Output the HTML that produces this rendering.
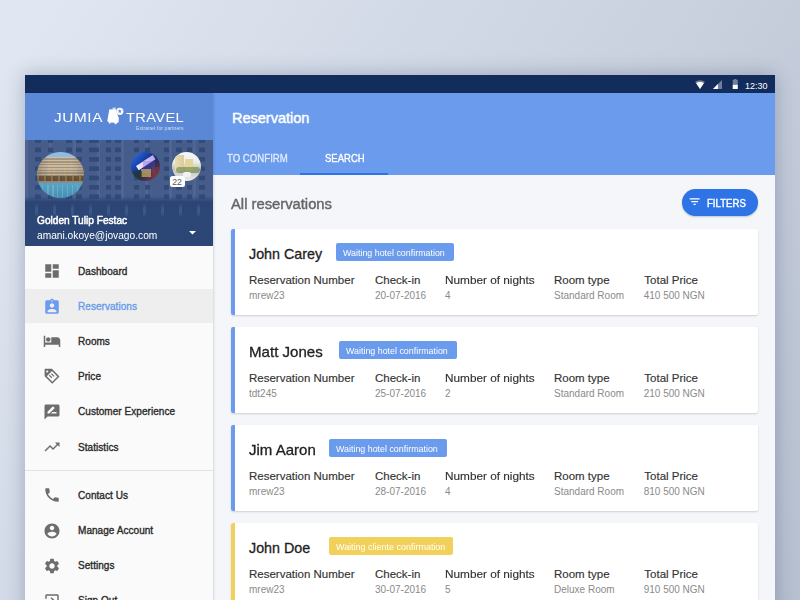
<!DOCTYPE html>
<html><head><meta charset="utf-8">
<style>
*{margin:0;padding:0;box-sizing:border-box;}
html,body{width:800px;height:600px;overflow:hidden;}
body{font-family:"Liberation Sans",sans-serif;background:linear-gradient(124deg,#e2e8f3 0%,#b7c0d0 100%);position:relative;}
.abs{position:absolute;}
.t{position:absolute;white-space:nowrap;line-height:1;transform-origin:0 0;}
svg{position:absolute;display:block;}
#tab{position:absolute;left:25px;top:75px;width:750px;height:540px;background:#f4f6fa;box-shadow:0 0 18px rgba(40,60,95,.32);overflow:hidden;}
#status{position:absolute;left:0;top:0;width:750px;height:18px;background:#122c5b;}
#side{position:absolute;left:0;top:18px;width:188px;height:520px;background:#fafafa;box-shadow:1px 0 2px rgba(0,0,0,.12);z-index:2;}
#shead{position:absolute;left:0;top:0;width:188px;height:47px;background:#5a88d6;}
#prof{position:absolute;left:0;top:47px;width:188px;height:106px;background:#3a5585;overflow:hidden;}
#app{position:absolute;left:188px;top:18px;width:562px;height:82px;background:#6a9bec;}
.card{position:absolute;left:206px;width:527px;height:86px;background:#fff;border-radius:2px;box-shadow:0 1px 2px rgba(0,0,0,.16);overflow:hidden;}
.card .bar{position:absolute;left:0;top:0;width:3.5px;height:86px;background:#6a9bec;}
.card.y .bar{background:#f2d15a;}
.nm{left:18px;top:17.7px;font-size:14.3px;color:#222;-webkit-text-stroke:0.3px currentColor;}
.badge{position:absolute;top:14px;width:118px;height:18px;background:#6a9bec;border-radius:2px;}
.badge span{position:absolute;left:7px;top:5.3px;font-size:9.6px;line-height:1;color:#fff;white-space:nowrap;transform:scaleX(.925);transform-origin:0 0;}
.card.y .badge{background:#f2d15a;width:124px;}
.card.y .badge span{transform:scaleX(.935);}
.lb{top:45.8px;font-size:11.5px;color:#333;-webkit-text-stroke:0.15px currentColor;}
.vl{top:62px;font-size:10px;color:#8a8a8a;}
.nav{left:53px;font-size:10px;font-weight:normal;color:#2a2a2a;letter-spacing:0.05px;-webkit-text-stroke:0.35px currentColor;}
.ic{left:17.75px;width:18px;height:18px;fill:#6d6d6d;}
</style></head><body>
<div id="tab">
  <div id="status">
    <svg style="left:670px;top:4.5px;width:10px;height:9px" viewBox="0 0 24 21"><path fill="rgba(255,255,255,.4)" d="M12 21L23.6 4C23.2 3.7 18.7 0 12 0S.8 3.7.4 4z"/><path fill="#fff" d="M12 21L21.2 7.3C19.5 6 16.3 4.3 12 4.3S4.5 6 2.8 7.3z"/></svg>
    <svg style="left:688px;top:4.5px;width:9px;height:9px" viewBox="0 0 20 20"><path fill="rgba(255,255,255,.4)" d="M0 20h20V0z"/><path fill="#fff" d="M0 20h11V9z"/></svg>
    <svg style="left:706.8px;top:3.6px;width:6.5px;height:10.2px" viewBox="0 0 10 20"><path fill="rgba(255,255,255,.4)" d="M3 0h4v1.5h2.3c.4 0 .7.3.7.7V10H0V2.2C0 1.8.3 1.5.7 1.5H3z"/><path fill="#fff" d="M0 11h10v8.3c0 .4-.3.7-.7.7H.7c-.4 0-.7-.3-.7-.7z"/></svg>
    <div class="t" style="left:720px;top:6.5px;font-size:9px;color:#fff;">12:30</div>
  </div>
  <div id="side">
    <div id="shead">
      <div class="t" style="left:29.3px;top:17.8px;font-size:13px;color:#fff;letter-spacing:0.5px;transform:scaleX(1.18);">JUMIA</div>
      <svg style="left:78px;top:11px;width:24px;height:24px" viewBox="103 104 24 24"><path fill="#fff" d="M109.3 109.4L115.6 109.1L116.9 113.2L118.9 118.2L118.5 122.6L116.6 122.9L116.4 124.3L114.8 124.3L114.5 122.8L110.6 122.4L110.4 123.4L109 123.4L108.6 122.1L107.3 121z"/><path fill="#fff" d="M112.6 107.7h3.2v1h-3.2z"/><circle cx="119.8" cy="111.3" r="3.6" fill="#fff"/><path fill="#5a88d6" d="M119.80,109.10 L120.36,110.53 L121.89,110.62 L120.70,111.59 L121.09,113.08 L119.80,112.25 L118.51,113.08 L118.90,111.59 L117.71,110.62 L119.24,110.53Z"/></svg>
      <div class="t" style="left:100.5px;top:17.8px;font-size:13px;color:#fff;letter-spacing:0.3px;transform:scaleX(1.13);">TRAVEL</div>
      <div class="t" style="left:110.8px;top:32.5px;font-size:5.7px;color:#cfdcf5;transform:scaleX(.92);">Extranet for partners</div>
    </div>
    <div id="prof">
      <div class="abs" style="left:0;top:0;width:188px;height:62px;background:#465d8c;"></div>
      <div class="abs" style="left:0;top:0;width:188px;height:62px;background:repeating-linear-gradient(90deg,rgba(95,118,160,.35) 0 3px,transparent 3px 24px);"></div>
      <div class="abs" style="left:0;top:0;width:188px;height:62px;background:linear-gradient(180deg,#2f4774 0 4.5px,transparent 4.5px);background-size:100% 9.35px;background-position:0 7.6px;-webkit-mask-image:linear-gradient(90deg,transparent 10px,#000 10px,#000 16px,transparent 16px,transparent 22.5px,#000 22.5px,#000 27.5px,transparent 27.5px,transparent 41px,#000 41px,#000 47px,transparent 47px,transparent 51px,#000 51px,#000 57px,transparent 57px,transparent 64px,#000 64px,#000 74px,transparent 74px,transparent 80.6px,#000 80.6px,#000 85.6px,transparent 85.6px,transparent 90px,#000 90px,#000 96px,transparent 96px,transparent 109.4px,#000 109.4px,#000 114.4px,transparent 114.4px,transparent 119.7px,#000 119.7px,#000 124.7px,transparent 124.7px,transparent 139px,#000 139px,#000 144px,transparent 144px,transparent 151px,#000 151px,#000 157px,transparent 157px,transparent 161.7px,#000 161.7px,#000 166.7px,transparent 166.7px,transparent 174px,#000 174px,#000 180px,transparent 180px);opacity:.85;"></div>
      <div class="abs" style="left:0;top:56px;width:188px;height:50px;background:linear-gradient(180deg,rgba(42,67,115,0) 0,rgba(42,67,115,.95) 6px,#2c4676 20px,#2b4575 50px);"></div>
      <div class="abs" style="left:0;top:63px;width:188px;height:14px;background:repeating-linear-gradient(90deg,transparent 0 10px,rgba(100,130,180,.3) 10px 13px,transparent 13px 18px);-webkit-mask-image:linear-gradient(180deg,transparent 0,#000 40%,#000 70%,transparent 100%);"></div>
      <div class="abs" style="left:12px;top:11.5px;width:46.6px;height:46.6px;border-radius:50%;overflow:hidden;background:linear-gradient(180deg,#8dbde6 0,#8dbde6 11%,#cdbfa8 11%,#c2b39d 51%,#6b5840 52%,#5e503e 63%,#a08078 64%,#8a8a98 67%,#55a5c8 68%,#3f90bb 100%);">
        <div class="abs" style="left:0;top:5px;width:47px;height:19px;background:repeating-linear-gradient(180deg,transparent 0 1.4px,rgba(70,55,40,.3) 1.4px 2.8px),repeating-linear-gradient(90deg,rgba(235,190,120,.3) 0 1.5px,transparent 1.5px 5.5px);"></div><div class="abs" style="left:0;top:5px;width:47px;height:20px;background:linear-gradient(90deg,rgba(90,85,80,.35) 0,transparent 25%,transparent 75%,rgba(90,85,80,.3) 100%);"></div>
        <div class="abs" style="left:0;top:24px;width:47px;height:5px;background:repeating-linear-gradient(90deg,rgba(200,140,60,.45) 0 2px,rgba(60,80,50,.3) 2px 4px,transparent 4px 7px);"></div>
        <div class="abs" style="left:0;top:33px;width:47px;height:14px;background:repeating-linear-gradient(90deg,rgba(210,200,160,.3) 0 1.5px,transparent 1.5px 5px);"></div>
      </div>
      <div class="abs" style="left:105.8px;top:11.8px;width:29px;height:29px;border-radius:50%;overflow:hidden;background:linear-gradient(135deg,#3a7ae0 0,#1d4fc0 25%,#13308a 45%,#2a2a60 60%,#6a3a40 85%,#4a2a28 100%);">
        <div class="abs" style="left:5px;top:9px;width:20px;height:4.5px;background:linear-gradient(90deg,#f0ecff,#b8a8e8);transform:rotate(-33deg);transform-origin:0 0;top:14px;"></div>
        <div class="abs" style="left:12px;top:9px;width:12px;height:12px;background:rgba(110,80,200,.3);"></div>
        <div class="abs" style="left:10px;top:17px;width:10px;height:8px;background:rgba(235,200,90,.6);"></div>
        <div class="abs" style="left:0;top:19px;width:11px;height:10px;background:rgba(40,60,30,.6);"></div>
        <div class="abs" style="left:21px;top:15px;width:8px;height:14px;background:rgba(150,60,50,.35);"></div>
      </div>
      <div class="abs" style="left:146.7px;top:11.5px;width:29px;height:29px;border-radius:50%;overflow:hidden;background:linear-gradient(180deg,#f4f6f8 0,#eceeed 35%,#d9d6c4 48%,#bfc2b8 62%,#cfd0cc 75%,#eeeeec 100%);">
        <div class="abs" style="left:3px;top:3px;width:9px;height:16px;background:linear-gradient(90deg,#e8ddb0,#d8cc98);"></div>
        <div class="abs" style="left:13px;top:7px;width:8px;height:12px;background:#e2d49a;"></div>
        <div class="abs" style="left:4px;top:15px;width:24px;height:6px;background:rgba(95,125,60,.55);border-radius:3px;"></div>
        <div class="abs" style="left:11px;top:20px;width:8px;height:5px;background:#f2f2f2;border-radius:2px;"></div>
      </div>
      <div class="abs" style="left:144.8px;top:35.5px;width:15.2px;height:11.5px;border-radius:2.5px;background:#fff;"></div>
      <div class="t" style="left:147.2px;top:37.6px;font-size:8.7px;color:#555;">22</div>
      <div class="t" style="left:11.7px;top:74.8px;font-size:10.5px;color:#fff;-webkit-text-stroke:0.5px currentColor;transform:scaleX(.965);">Golden Tulip Festac</div>
      <div class="t" style="left:11.7px;top:89.9px;font-size:11px;color:#fff;transform:scaleX(.927);">amani.okoye@jovago.com</div>
      <svg style="left:163.5px;top:90.5px;width:7px;height:4px" viewBox="0 0 7 4"><path fill="#fff" d="M0 0h7L3.5 3.6z"/></svg>
    </div>
    <div class="abs" style="left:0;top:195.5px;width:188px;height:34.5px;background:#eeeeee;"></div>
    <svg class="ic" style="top:169px" viewBox="0 0 24 24"><path d="M3 13h8V3H3v10zm0 8h8v-6H3v6zm10 0h8V11h-8v10zm0-18v6h8V3h-8z"/></svg>
    <div class="nav t" style="top:173.5px;">Dashboard</div>
    <svg class="ic" style="top:204.5px;fill:#6a9bec" viewBox="0 0 24 24"><path d="M19 3h-4.18C14.4 1.84 13.3 1 12 1c-1.3 0-2.4.84-2.82 2H5c-1.1 0-2 .9-2 2v14c0 1.1.9 2 2 2h14c1.1 0 2-.9 2-2V5c0-1.1-.9-2-2-2zm-7 0c.55 0 1 .45 1 1s-.45 1-1 1-1-.45-1-1 .45-1 1-1zm0 4c1.66 0 3 1.34 3 3s-1.34 3-3 3-3-1.34-3-3 1.34-3 3-3zm6 12H6v-1.4c0-2 4-3.1 6-3.1s6 1.1 6 3.1V19z"/></svg>
    <div class="nav t" style="top:208.7px;color:#6a9bec;">Reservations</div>
    <svg class="ic" style="top:238.7px" viewBox="0 0 24 24"><path d="M7 13c1.66 0 3-1.34 3-3S8.66 7 7 7s-3 1.34-3 3 1.34 3 3 3zm12-6h-8v7H3V5H1v15h2v-3h18v3h2v-9c0-2.21-1.79-4-4-4z"/></svg>
    <div class="nav t" style="top:243.9px;">Rooms</div>
    <svg style="left:17px;top:273px;width:20px;height:20px" viewBox="42 366 20 20"><path fill="#6d6d6d" fill-rule="evenodd" d="M45.3 368.8H51.9L59.5 376.6L52.3 383.8L44.6 376.2V369.5Q44.6 368.8 45.3 368.8Z M52 370.9L57.4 376.6L52.3 381.7L46.8 376.2Z"/><circle cx="47.2" cy="371.5" r="1.1" fill="#fafafa"/><path stroke="#6d6d6d" stroke-width="1.25" d="M49.2 375.1L51.8 377.8M51.3 373.6L54.2 376.4"/></svg>
    <div class="nav t" style="top:279.1px;">Price</div>
    <svg class="ic" style="top:309.6px" viewBox="0 0 24 24"><path d="M20 2H4c-1.1 0-1.99.9-1.99 2L2 22l4-4h14c1.1 0 2-.9 2-2V4c0-1.1-.9-2-2-2zM6 14v-2.47l6.88-6.88c.2-.2.51-.2.71 0l1.77 1.77c.2.2.2.51 0 .71L8.47 14H6zm12 0h-7.5l2-2H18v2z"/></svg>
    <div class="nav t" style="top:314.3px;">Customer Experience</div>
    <svg class="ic" style="top:345px" viewBox="0 0 24 24"><path d="M16 6l2.29 2.29-4.88 4.88-4-4L2 16.59 3.41 18l6-6 4 4 6.3-6.29L22 12V6z"/></svg>
    <div class="nav t" style="top:349.5px;">Statistics</div>
    <div class="abs" style="left:0;top:377px;width:188px;height:1px;background:#e3e3e3;"></div>
    <svg class="ic" style="top:393px" viewBox="0 0 24 24"><path d="M6.62 10.79c1.44 2.830 3.76 5.14 6.59 6.59l2.2-2.2c.27-.27.67-.36 1.02-.24 1.12.37 2.33.57 3.57.57.55 0 1 .45 1 1V20c0 .55-.45 1-1 1-9.39 0-17-7.61-17-17 0-.55.45-1 1-1h3.5c.55 0 1 .45 1 1 0 1.25.2 2.45.57 3.57.11.35.03.74-.25 1.02l-2.2 2.2z"/></svg>
    <div class="nav t" style="top:397.8px;">Contact Us</div>
    <svg class="ic" style="top:428.5px" viewBox="0 0 24 24"><path d="M12 2C6.48 2 2 6.48 2 12s4.48 10 10 10 10-4.48 10-10S17.52 2 12 2zm0 3c1.66 0 3 1.34 3 3s-1.34 3-3 3-3-1.34-3-3 1.34-3 3-3zm0 14.2c-2.5 0-4.71-1.28-6-3.22.03-1.990 4-3.08 6-3.08 1.99 0 5.970 1.09 6 3.08-1.29 1.94-3.5 3.22-6 3.22z"/></svg>
    <div class="nav t" style="top:433.0px;">Manage Account</div>
    <svg class="ic" style="top:464px" viewBox="0 0 24 24"><path d="M19.14 12.94c.04-.3.06-.61.06-.94 0-.32-.02-.64-.07-.94l2.03-1.58c.18-.14.23-.41.12-.61l-1.92-3.32c-.12-.22-.37-.29-.59-.22l-2.39.96c-.5-.38-1.03-.7-1.62-.94l-.36-2.54c-.04-.24-.24-.41-.48-.41h-3.840c-.24 0-.43.17-.47.41l-.36 2.54c-.59.24-1.13.57-1.62.94l-2.39-.96c-.22-.08-.47 0-.59.22L2.74 8.87c-.12.21-.08.47.12.61l2.03 1.58c-.05.3-.09.63-.09.94s.02.64.07.94l-2.03 1.58c-.18.14-.23.41-.12.61l1.92 3.32c.12.22.37.29.59.22l2.39-.96c.5.38 1.03.7 1.62.94l.36 2.54c.05.24.24.41.48.41h3.84c.24 0 .44-.17.47-.41l.36-2.54c.59-.24 1.13-.56 1.62-.94l2.39.96c.22.08.47 0 .59-.22l1.92-3.32c.12-.22.07-.47-.12-.61l-2.01-1.58zM12 15.6c-1.98 0-3.6-1.62-3.6-3.6s1.62-3.6 3.6-3.6 3.6 1.62 3.6 3.6-1.62 3.6-3.6 3.6z"/></svg>
    <div class="nav t" style="top:468.2px;">Settings</div>
    <svg class="ic" style="top:499px" viewBox="0 0 24 24"><path d="M10.09 15.59L11.5 17l5-5-5-5-1.41 1.41L12.67 11H3v2h9.67l-2.58 2.59zM19 3H5c-1.11 0-2 .9-2 2v4h2V5h14v14H5v-4H3v4c0 1.1.89 2 2 2h14c1.1 0 2-.9 2-2V5c0-1.1-.9-2-2-2z"/></svg>
    <div class="nav t" style="top:503.4px;">Sign Out</div>
  </div>
  <div id="app">
    <div class="t" style="left:19px;top:17.9px;font-size:14.5px;color:#fff;-webkit-text-stroke:0.45px currentColor;">Reservation</div>
    <div class="t" style="left:13.5px;top:60px;font-size:11px;color:rgba(255,255,255,.72);-webkit-text-stroke:0.35px currentColor;transform:scaleX(.875);">TO CONFIRM</div>
    <div class="t" style="left:111.5px;top:60px;font-size:11px;color:#fff;-webkit-text-stroke:0.35px currentColor;transform:scaleX(.865);">SEARCH</div>
    <div class="abs" style="left:87px;top:79.5px;width:88px;height:2.5px;background:#2f74e6;"></div>
  </div>
  <div class="t" style="left:206px;top:122px;font-size:14px;color:#666;-webkit-text-stroke:0.4px currentColor;transform:scaleX(1.055);">All reservations</div>
  <div class="abs" style="left:657px;top:114px;width:76px;height:26.5px;border-radius:13.25px;background:#2f74e6;box-shadow:0 1px 2px rgba(0,0,0,.2);"></div>
  <svg style="left:663.3px;top:120.4px;width:13.3px;height:13.3px;fill:#fff" viewBox="0 0 24 24"><path d="M10 18h4v-2h-4v2zM3 6v2h18V6H3zm3 7h12v-2H6v2z"/></svg>
  <div class="t" style="left:682.3px;top:122.6px;font-size:10.5px;color:#fff;-webkit-text-stroke:0.4px currentColor;transform:scaleX(.915);">FILTERS</div>

  <div class="card" style="top:154px;"><div class="bar"></div>
    <div class="nm t">John Carey</div><div class="badge" style="left:105px;"><span>Waiting hotel confirmation</span></div>
    <div class="lb t" style="left:18px;">Reservation Number</div><div class="vl t" style="left:18px;">mrew23</div>
    <div class="lb t" style="left:144px;">Check-in</div><div class="vl t" style="left:144px;">20-07-2016</div>
    <div class="lb t" style="left:214px;transform:scaleX(1.025)">Number of nights</div><div class="vl t" style="left:214px;">4</div>
    <div class="lb t" style="left:323px;">Room type</div><div class="vl t" style="left:323px;">Standard Room</div>
    <div class="lb t" style="left:413.3px;">Total Price</div><div class="vl t" style="left:412.7px;">410 500 NGN</div>
  </div>
  <div class="card" style="top:252px;"><div class="bar"></div>
    <div class="nm t" style="transform:scaleX(1.055)">Matt Jones</div><div class="badge" style="left:108px;"><span>Waiting hotel confirmation</span></div>
    <div class="lb t" style="left:18px;">Reservation Number</div><div class="vl t" style="left:18px;">tdt245</div>
    <div class="lb t" style="left:144px;">Check-in</div><div class="vl t" style="left:144px;">25-07-2016</div>
    <div class="lb t" style="left:214px;transform:scaleX(1.025)">Number of nights</div><div class="vl t" style="left:214px;">2</div>
    <div class="lb t" style="left:323px;">Room type</div><div class="vl t" style="left:323px;">Standard Room</div>
    <div class="lb t" style="left:413.3px;">Total Price</div><div class="vl t" style="left:412.7px;">210 500 NGN</div>
  </div>
  <div class="card" style="top:350px;"><div class="bar"></div>
    <div class="nm t" style="transform:scaleX(1.05)">Jim Aaron</div><div class="badge" style="left:98px;"><span>Waiting hotel confirmation</span></div>
    <div class="lb t" style="left:18px;">Reservation Number</div><div class="vl t" style="left:18px;">mrew23</div>
    <div class="lb t" style="left:144px;">Check-in</div><div class="vl t" style="left:144px;">28-07-2016</div>
    <div class="lb t" style="left:214px;transform:scaleX(1.025)">Number of nights</div><div class="vl t" style="left:214px;">4</div>
    <div class="lb t" style="left:323px;">Room type</div><div class="vl t" style="left:323px;">Standard Room</div>
    <div class="lb t" style="left:413.3px;">Total Price</div><div class="vl t" style="left:412.7px;">810 500 NGN</div>
  </div>
  <div class="card y" style="top:448px;"><div class="bar"></div>
    <div class="nm t">John Doe</div><div class="badge" style="left:98px;"><span>Waiting cliente confirmation</span></div>
    <div class="lb t" style="left:18px;">Reservation Number</div><div class="vl t" style="left:18px;">mrew23</div>
    <div class="lb t" style="left:144px;">Check-in</div><div class="vl t" style="left:144px;">30-07-2016</div>
    <div class="lb t" style="left:214px;transform:scaleX(1.025)">Number of nights</div><div class="vl t" style="left:214px;">5</div>
    <div class="lb t" style="left:323px;">Room type</div><div class="vl t" style="left:323px;">Deluxe Room</div>
    <div class="lb t" style="left:413.3px;">Total Price</div><div class="vl t" style="left:412.7px;">910 500 NGN</div>
  </div>
</div>
</body></html>
